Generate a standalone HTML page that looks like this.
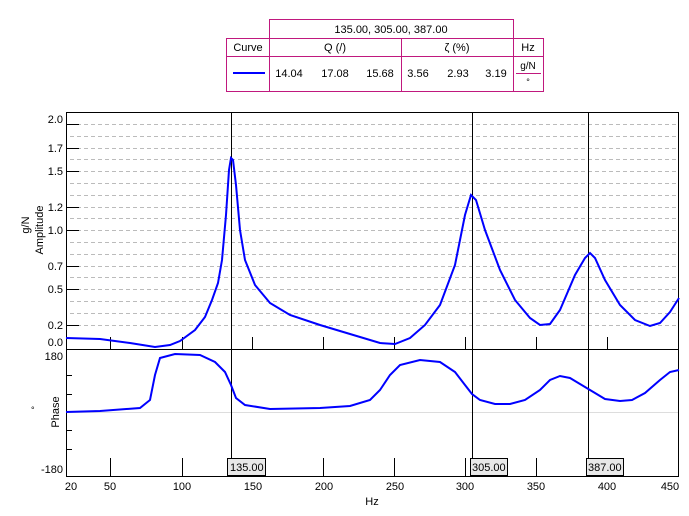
<!DOCTYPE html>
<html><head><style>
body{margin:0;background:#fff;width:689px;height:511px;overflow:hidden;font-family:"Liberation Sans",sans-serif;}
</style></head><body>
<svg width="689" height="511" viewBox="0 0 689 511" xmlns="http://www.w3.org/2000/svg" font-family="Liberation Sans, sans-serif" font-size="11">
<!-- table -->
<g stroke="#c0187e" stroke-width="1" fill="none">
<rect x="269.5" y="19.5" width="244" height="19"/>
<rect x="226.5" y="38.5" width="317" height="53"/>
<line x1="226" y1="56.5" x2="544" y2="56.5"/>
<line x1="269.5" y1="38" x2="269.5" y2="92"/>
<line x1="401.5" y1="38" x2="401.5" y2="92"/>
<line x1="513.5" y1="38" x2="513.5" y2="92"/>
<line x1="516" y1="73.5" x2="541" y2="73.5"/>
</g>
<line x1="233" y1="73" x2="265" y2="73" stroke="#0000ff" stroke-width="2"/>
<g fill="#000" text-anchor="middle">
<text x="391" y="33">135.00, 305.00, 387.00</text>
<text x="248" y="51">Curve</text>
<text x="335" y="51">Q (/)</text>
<text x="457" y="51">ζ (%)</text>
<text x="528" y="51">Hz</text>
<text x="289" y="77">14.04</text>
<text x="335" y="77">17.08</text>
<text x="380" y="77">15.68</text>
<text x="418" y="77">3.56</text>
<text x="458" y="77">2.93</text>
<text x="496" y="77">3.19</text>
<text x="528" y="69" font-size="10">g/N</text>
<text x="528" y="85" font-size="9">°</text>
</g>
<!-- grid -->
<g stroke="#bbb" stroke-dasharray="4,3">
<line x1="70" y1="124.5" x2="679" y2="124.5"/><line x1="70" y1="136.5" x2="679" y2="136.5"/>
<line x1="70" y1="148.5" x2="679" y2="148.5"/><line x1="70" y1="159.5" x2="679" y2="159.5"/>
<line x1="70" y1="171.5" x2="679" y2="171.5"/><line x1="70" y1="183.5" x2="679" y2="183.5"/>
<line x1="70" y1="195.5" x2="679" y2="195.5"/><line x1="70" y1="207.5" x2="679" y2="207.5"/>
<line x1="70" y1="218.5" x2="679" y2="218.5"/><line x1="70" y1="230.5" x2="679" y2="230.5"/>
<line x1="70" y1="242.5" x2="679" y2="242.5"/><line x1="70" y1="254.5" x2="679" y2="254.5"/>
<line x1="70" y1="266.5" x2="679" y2="266.5"/><line x1="70" y1="277.5" x2="679" y2="277.5"/>
<line x1="70" y1="289.5" x2="679" y2="289.5"/><line x1="70" y1="301.5" x2="679" y2="301.5"/>
<line x1="70" y1="313.5" x2="679" y2="313.5"/><line x1="70" y1="325.5" x2="679" y2="325.5"/>
</g>
<line x1="66" y1="412.5" x2="679" y2="412.5" stroke="#ddd"/>
<!-- frames -->
<g stroke="#000" fill="none">
<rect x="66.5" y="112.5" width="612" height="364"/>
<line x1="66" y1="349.5" x2="679" y2="349.5"/>
<!-- left major ticks amp -->
<line x1="66" y1="124.5" x2="79" y2="124.5"/><line x1="66" y1="148.5" x2="79" y2="148.5"/>
<line x1="66" y1="171.5" x2="79" y2="171.5"/><line x1="66" y1="207.5" x2="79" y2="207.5"/>
<line x1="66" y1="230.5" x2="79" y2="230.5"/><line x1="66" y1="266.5" x2="79" y2="266.5"/>
<line x1="66" y1="289.5" x2="79" y2="289.5"/><line x1="66" y1="325.5" x2="79" y2="325.5"/>
<!-- phase left ticks -->
<line x1="66" y1="375.5" x2="72" y2="375.5"/><line x1="66" y1="394.5" x2="72" y2="394.5"/>
<line x1="66" y1="430.5" x2="72" y2="430.5"/><line x1="66" y1="449.5" x2="72" y2="449.5"/>
<!-- bottom ticks amp -->
<line x1="110.5" y1="337" x2="110.5" y2="349"/><line x1="182.5" y1="337" x2="182.5" y2="349"/>
<line x1="252.5" y1="337" x2="252.5" y2="349"/><line x1="323.5" y1="337" x2="323.5" y2="349"/>
<line x1="394.5" y1="337" x2="394.5" y2="349"/><line x1="465.5" y1="337" x2="465.5" y2="349"/>
<line x1="536.5" y1="337" x2="536.5" y2="349"/><line x1="607.5" y1="337" x2="607.5" y2="349"/>
<!-- bottom ticks phase -->
<line x1="110.5" y1="458" x2="110.5" y2="476"/><line x1="182.5" y1="458" x2="182.5" y2="476"/>
<line x1="252.5" y1="458" x2="252.5" y2="476"/><line x1="323.5" y1="458" x2="323.5" y2="476"/>
<line x1="394.5" y1="458" x2="394.5" y2="476"/><line x1="465.5" y1="458" x2="465.5" y2="476"/>
<line x1="536.5" y1="458" x2="536.5" y2="476"/><line x1="607.5" y1="458" x2="607.5" y2="476"/>
<!-- cursors -->
<line x1="231.5" y1="112" x2="231.5" y2="476"/>
<line x1="472.5" y1="112" x2="472.5" y2="476"/>
<line x1="588.5" y1="112" x2="588.5" y2="476"/>
</g>
<!-- curves -->
<polyline fill="none" stroke="#0000ff" stroke-width="2" points="66,338 100,339 130,343 155,347 170,345 180,341 195,330 205,317 212,300 218,283 222,260 226,215 229,170 231,158 233,160 236,185 240,230 245,260 255,285 270,303 290,315 320,325 350,334 380,343 395,344 410,338 425,325 440,305 455,265 465,215 471,195 476,200 485,230 500,270 515,300 530,318 540,325 550,324 560,310 575,275 585,258 590,253 595,258 605,280 620,305 635,320 650,326 660,323 670,312 679,298"/>
<polyline fill="none" stroke="#0000ff" stroke-width="2" points="66,412 100,411 140,408 150,400 155,375 160,358 175,354 200,355 215,362 225,372 231,385 236,398 245,405 270,409 320,408 350,406 370,400 380,390 390,375 400,365 420,360 440,362 455,372 465,385 472,394 480,400 495,404 510,404 525,400 540,390 550,380 560,376 570,378 585,387 595,393 605,399 620,401 632,400 645,393 660,380 670,372 679,370"/>
<!-- cursor labels -->
<g font-size="11">
<rect x="227.5" y="458.5" width="38" height="17" fill="#e8e8e8" stroke="#000"/>
<text x="230" y="471">135.00</text>
<rect x="470.5" y="458.5" width="37" height="17" fill="#e8e8e8" stroke="#000"/>
<text x="472" y="471">305.00</text>
<rect x="586.5" y="458.5" width="37" height="17" fill="#e8e8e8" stroke="#000"/>
<text x="588" y="471">387.00</text>
</g>
<!-- y labels -->
<g text-anchor="end" font-size="11">
<text x="63" y="123">2.0</text><text x="63" y="152">1.7</text><text x="63" y="175">1.5</text>
<text x="63" y="211">1.2</text><text x="63" y="234">1.0</text><text x="63" y="270">0.7</text>
<text x="63" y="293">0.5</text><text x="63" y="329">0.2</text><text x="63" y="346">0.0</text>
<text x="63" y="360">180</text><text x="63" y="473">-180</text>
</g>
<text transform="translate(29,225) rotate(-90)" text-anchor="middle" font-size="11">g/N</text>
<text transform="translate(43,230) rotate(-90)" text-anchor="middle" font-size="11">Amplitude</text>
<text x="31" y="413" font-size="9">°</text>
<text transform="translate(59,412) rotate(-90)" text-anchor="middle" font-size="11">Phase</text>
<!-- x labels -->
<g text-anchor="middle" font-size="11">
<text x="71" y="490">20</text><text x="110" y="490">50</text><text x="182" y="490">100</text>
<text x="253" y="490">150</text><text x="324" y="490">200</text><text x="395" y="490">250</text>
<text x="465" y="490">300</text><text x="536" y="490">350</text><text x="607" y="490">400</text>
<text x="670" y="490">450</text>
<text x="372" y="505">Hz</text>
</g>
</svg>
</body></html>
